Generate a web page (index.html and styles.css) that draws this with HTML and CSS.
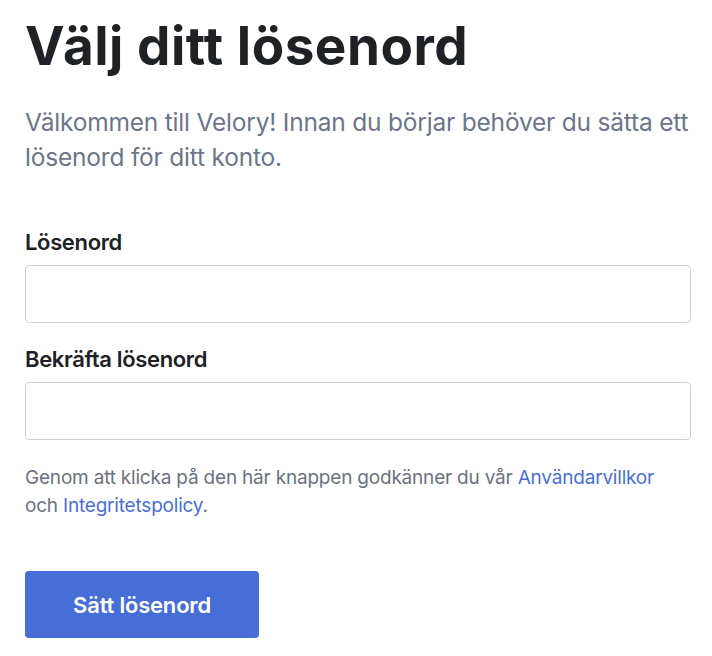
FILE: index.html
```html
<!DOCTYPE html>
<html lang="sv">
<head>
<meta charset="utf-8">
<link rel="stylesheet" href="styles.css">
</head>
<body>
<main class="page">
  <h1 class="title">Välj ditt lösenord</h1>
  <p class="intro">Välkommen till Velory! Innan du börjar behöver du sätta ett lösenord för ditt konto.</p>
  <form class="form">
    <div class="field">
      <label class="label" for="pw">Lösenord</label>
      <input class="input" id="pw" type="password">
    </div>
    <div class="field">
      <label class="label" for="pw2">Bekräfta lösenord</label>
      <input class="input" id="pw2" type="password">
    </div>
    <p class="terms">Genom att klicka på den här knappen godkänner du vår <a href="#">Användarvillkor</a> och <a href="#">Integritetspolicy</a>.</p>
    <button class="btn" type="button">Sätt lösenord</button>
  </form>
</main>
</body>
</html>
```

FILE: styles.css
```css
* { box-sizing: border-box; }
html, body { margin: 0; background: #fff; }
body {
  font-family: Inter, "Noto Sans", sans-serif;
  color: #1e2125;
}
.page {
  padding: 14px 21px 0 25px;
}
.title {
  margin: 0;
  font-size: 53px;
  line-height: 64px;
  font-weight: 700;
  letter-spacing: 0.5px;
  color: #1e2125;
}
.intro {
  margin: 27px 0 0;
  font-size: 24.5px;
  line-height: 35px;
  letter-spacing: -0.2px;
  color: #6b7689;
}
.form {
  margin-top: 54px;
  display: flex;
  flex-direction: column;
  align-items: stretch;
}
.field {
  display: flex;
  flex-direction: column;
  gap: 10px;
  margin-bottom: 23px;
}
.field + .field {
  margin-bottom: 24px;
}
.label {
  font-size: 22px;
  line-height: 26px;
  font-weight: 600;
  letter-spacing: -0.35px;
  color: #1e2125;
}
.input {
  height: 58px;
  border: 1px solid #cdd3db;
  border-radius: 4px;
  font: inherit;
  padding: 0 14px;
  background: #fff;
}
.terms {
  margin: 0;
  font-size: 19px;
  line-height: 28px;
  letter-spacing: -0.2px;
  color: #6b7280;
}
.terms a {
  color: #4a6fd4;
  text-decoration: none;
}
.btn {
  align-self: flex-start;
  margin-top: 51px;
  width: 234px;
  height: 67px;
  border: 0;
  border-radius: 4px;
  background: #476ed6;
  color: #fff;
  font-family: inherit;
  font-size: 22px;
  font-weight: 600;
  letter-spacing: -0.2px;
}
```
